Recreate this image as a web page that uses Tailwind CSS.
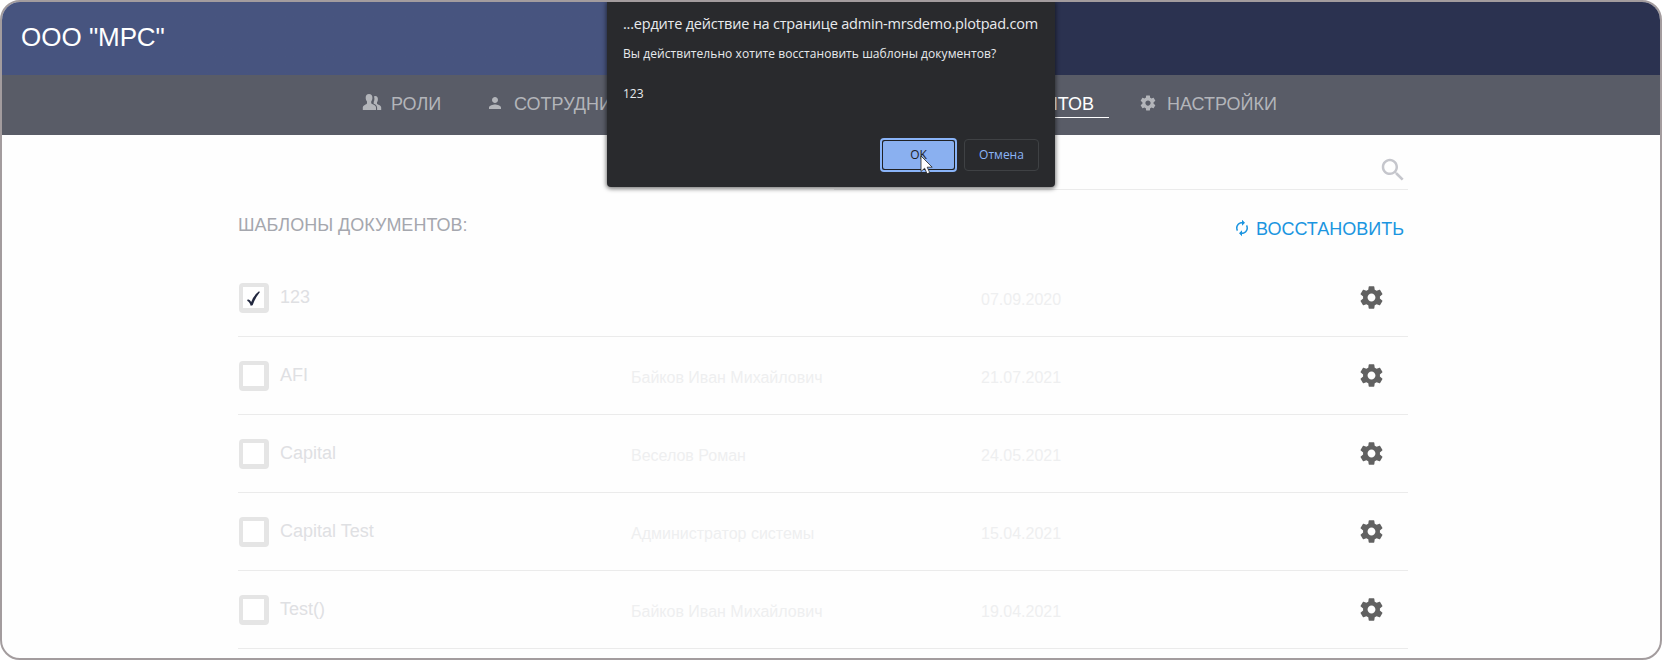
<!DOCTYPE html>
<html lang="ru"><head><meta charset="utf-8"><title>Шаблоны документов</title>
<script src="https://cdn.jsdelivr.net/npm/@tailwindcss/browser@4"></script></head>
<body class="bg-white">
<svg class="hidden"><symbol id="gear" viewBox="0 0 24 24"><path d="M19.43 12.98c.04-.32.07-.64.07-.98s-.03-.66-.07-.98l2.11-1.65c.19-.15.24-.42.12-.64l-2-3.46c-.12-.22-.39-.3-.61-.22l-2.49 1c-.52-.4-1.08-.73-1.69-.98l-.38-2.65C14.46 2.18 14.25 2 14 2h-4c-.25 0-.46.18-.49.42l-.38 2.65c-.61.25-1.17.59-1.69.98l-2.49-1c-.23-.09-.49 0-.61.22l-2 3.46c-.13.22-.07.49.12.64l2.11 1.65c-.04.32-.07.65-.07.98s.03.66.07.98l-2.11 1.65c-.19.15-.24.42-.12.64l2 3.46c.12.22.39.3.61.22l2.49-1c.52.4 1.08.73 1.69.98l.38 2.65c.03.24.24.42.49.42h4c.25 0 .46-.18.49-.42l.38-2.65c.61-.25 1.17-.59 1.69-.98l2.49 1c.23.09.49 0 .61-.22l2-3.46c.12-.22.07-.49-.12-.64l-2.11-1.65zM12 15.5c-1.93 0-3.5-1.57-3.5-3.5s1.57-3.5 3.5-3.5 3.5 1.57 3.5 3.5-1.57 3.5-3.5 3.5z"/></symbol></svg>
<div class="relative flex h-[660px] w-[1662px] flex-col overflow-hidden rounded-[20px] border-2 border-[#a39c9e] bg-[#fefefe] font-['Liberation_Sans',sans-serif]">
  <header class="h-[73px] shrink-0 bg-linear-to-r from-[#47547f] from-37% to-[#2b3250] to-63% pt-[19px] pl-[19px] text-[26px] leading-[32px] text-white">ООО "МРС"</header>
  <nav class="flex h-[60px] shrink-0 items-start bg-[#595c67] pt-[18px] pl-[360px] text-[18px] leading-[22px] whitespace-nowrap text-[#b3b5ba]">
    <a class="flex w-[124px]"><svg class="mt-px mr-[9px] h-[18px] w-5 fill-current" viewBox="0 0 20 18"><path d="M7 0c2.200 0 3.500 1.500 3.400 3.800 0 1.600-.5 2.800-1.200 3.700v1.800c.3.900 4.800 1.600 4.800 4.200V16H.8v-2.500c0-2.500 3.800-3 4.200-4V7.500C4.200 6.600 3.700 5.400 3.700 3.800 3.600 1.500 4.800 0 7 0z"/><path d="M13.200 2c2 0 2.800 1.500 2.700 3.200 0 1.400-.4 2.300-.9 3v1.600c.5 1 4.200 1.300 4.200 3.700V16h-4.100v-2.500c0-2.200-1.800-3-3.400-3.800V8c.5-1 .8-2.300.7-3.500 0-.8-.2-1.400-.5-2 .3-.3.800-.5 1.300-.5z"/></svg>РОЛИ</a>
    <a class="flex w-[160px]"><svg class="mt-px mr-[10px] h-[18px] w-[18px] fill-current" viewBox="0 0 24 24"><path d="M12 12c2.210 0 4-1.790 4-4s-1.790-4-4-4-4 1.790-4 4 1.790 4 4 4zm0 2c-2.670 0-8 1.340-8 4v2h16v-2c0-2.660-5.330-4-8-4z"/></svg>СОТРУДНИКИ</a>
    <a class="ml-[216px] h-[25px] w-[247px] border-b border-white pr-[15px] text-right text-white">ШАБЛОНЫ ДОКУМЕНТОВ</a>
    <a class="ml-[30px] flex"><svg class="mt-px mr-[10px] h-[18px] w-[18px] fill-current"><use href="#gear"/></svg>НАСТРОЙКИ</a>
  </nav>
  <main class="flex w-[1406px] flex-col pl-[236px]">
    <div class="flex h-[55px] w-[574px] justify-end self-end border-b border-[#ebebeb] pt-5"><svg class="h-[30px] w-[30px] fill-[#c5c6cc]" viewBox="0 0 24 24"><path d="M15.500 14h-.79l-.28-.27C15.410 12.590 16 11.110 16 9.500 16 5.910 13.090 3 9.500 3S3 5.910 3 9.500 5.910 16 9.500 16c1.610 0 3.090-.59 4.230-1.570l.27.28v.79l5 4.990L20.490 19l-4.990-5zm-6 0C7.010 14 5 11.990 5 9.500S7.010 5 9.500 5 14 7.010 14 9.500 11.990 14 9.500 14z"/></svg></div>
    <div class="flex h-[69px] items-start justify-between pr-[4px] text-[18px] leading-5 text-[#a5a7ae]">
      <h1 class="pt-[25px]">ШАБЛОНЫ ДОКУМЕНТОВ:</h1>
      <a class="flex pt-[29px] text-[#1b95e0]"><svg class="mr-[5px] h-[18px] w-[18px] fill-current" viewBox="0 0 24 24"><path d="M12 6v3l4-4-4-4v3c-4.420 0-8 3.580-8 8 0 1.570.46 3.030 1.240 4.260L6.700 14.800c-.45-.83-.7-1.790-.7-2.800 0-3.310 2.690-6 6-6zm6.760 1.740L17.300 9.200c.44.84.7 1.790.7 2.800 0 3.310-2.690 6-6 6v-3l-4 4 4 4v-3c4.420 0 8-3.580 8-8 0-1.570-.46-3.030-1.240-4.260z"/></svg>ВОССТАНОВИТЬ</a>
    </div>
    <div class="flex h-[78px] items-start border-b border-[#ebebeb]"><span class="mt-6 ml-px flex h-[30px] w-[30px] items-center justify-center rounded-[4px] border-4 border-r-5 border-b-5 border-[#e5e5e5] bg-white pt-px"><svg class="h-[15px] w-[13px] fill-[#22283f]" viewBox="0 0 13 15"><path d="M0.200 8.800Q2.600 7.400 4.200 11Q6.500 4.500 12 .3L12.900 1Q8.500 6.500 5.600 14.300L3.700 14.700Q2.300 10.600.4 10z"/></svg></span><span class="w-[362px] pt-[28px] pl-[11px] text-[18px] leading-5 text-[#dfe0e3]">123</span><span class="w-[350px] pt-[31px] text-[16px] leading-5 text-[#eeeff0]"></span><span class="w-[377px] pt-[31px] text-[16px] leading-5 text-[#eeeff0]">07.09.2020</span><svg class="mt-[25px] h-[27px] w-[27px] fill-[#616161]"><use href="#gear"/></svg></div>
    <div class="flex h-[78px] items-start border-b border-[#ebebeb]"><span class="mt-6 ml-px h-[30px] w-[30px] rounded-[4px] border-4 border-r-5 border-b-5 border-[#e5e5e5] bg-white"></span><span class="w-[362px] pt-[28px] pl-[11px] text-[18px] leading-5 text-[#dfe0e3]">AFI</span><span class="w-[350px] pt-[31px] text-[16px] leading-5 text-[#eeeff0]">Байков Иван Михайлович</span><span class="w-[377px] pt-[31px] text-[16px] leading-5 text-[#eeeff0]">21.07.2021</span><svg class="mt-[25px] h-[27px] w-[27px] fill-[#616161]"><use href="#gear"/></svg></div>
    <div class="flex h-[78px] items-start border-b border-[#ebebeb]"><span class="mt-6 ml-px h-[30px] w-[30px] rounded-[4px] border-4 border-r-5 border-b-5 border-[#e5e5e5] bg-white"></span><span class="w-[362px] pt-[28px] pl-[11px] text-[18px] leading-5 text-[#dfe0e3]">Capital</span><span class="w-[350px] pt-[31px] text-[16px] leading-5 text-[#eeeff0]">Веселов Роман</span><span class="w-[377px] pt-[31px] text-[16px] leading-5 text-[#eeeff0]">24.05.2021</span><svg class="mt-[25px] h-[27px] w-[27px] fill-[#616161]"><use href="#gear"/></svg></div>
    <div class="flex h-[78px] items-start border-b border-[#ebebeb]"><span class="mt-6 ml-px h-[30px] w-[30px] rounded-[4px] border-4 border-r-5 border-b-5 border-[#e5e5e5] bg-white"></span><span class="w-[362px] pt-[28px] pl-[11px] text-[18px] leading-5 text-[#dfe0e3]">Capital Test</span><span class="w-[350px] pt-[31px] text-[16px] leading-5 text-[#eeeff0]">Администратор системы</span><span class="w-[377px] pt-[31px] text-[16px] leading-5 text-[#eeeff0]">15.04.2021</span><svg class="mt-[25px] h-[27px] w-[27px] fill-[#616161]"><use href="#gear"/></svg></div>
    <div class="flex h-[78px] items-start border-b border-[#ebebeb]"><span class="mt-6 ml-px h-[30px] w-[30px] rounded-[4px] border-4 border-r-5 border-b-5 border-[#e5e5e5] bg-white"></span><span class="w-[362px] pt-[28px] pl-[11px] text-[18px] leading-5 text-[#dfe0e3]">Test()</span><span class="w-[350px] pt-[31px] text-[16px] leading-5 text-[#eeeff0]">Байков Иван Михайлович</span><span class="w-[377px] pt-[31px] text-[16px] leading-5 text-[#eeeff0]">19.04.2021</span><svg class="mt-[25px] h-[27px] w-[27px] fill-[#616161]"><use href="#gear"/></svg></div>
  </main>
  <!-- Browser confirmation dialog -->
  <div class="absolute top-0 left-[605px] flex h-[185px] w-[448px] flex-col rounded-b-[4px] bg-[#292a2d] pl-4 font-['Open_Sans','Noto_Sans',sans-serif] whitespace-nowrap text-[#e8eaed] shadow-[0_1px_4px_1px_rgba(0,0,0,0.5)]">
    <div class="h-[34px] pt-[11px] text-[14.5px] leading-[22px] tracking-[-0.21px]">...ердите действие на странице admin-mrsdemo.plotpad.com</div>
    <div class="pt-2 text-[12px] leading-5 tracking-[0.06px]">Вы действительно хотите восстановить шаблоны документов?</div>
    <div class="pt-5 text-[12px] leading-5">123</div>
    <div class="mt-[34px] flex items-center gap-[7px] pl-[257px] text-[12px]">
      <button class="relative h-[34px] w-[77px] rounded-[4px] border-2 border-[#8ab4f8] bg-[#202124] p-px text-[#202124]"><span class="flex h-full items-center justify-center rounded-[2px] bg-[#8ab0f0]">OK</span>
        <svg class="absolute top-[15px] left-[38px] h-[20px] w-[14px]" viewBox="0 0 14 20"><path d="M1 1v15.500l3.600-3.300 2.500 5.600 2.600-1.200-2.500-5.400h5z" fill="#fff" stroke="#222" stroke-width=".8"/></svg></button>
      <button class="h-8 w-[75px] rounded-[4px] border border-[#3f4144] text-[#8ab4f8]">Отмена</button>
    </div>
  </div>
</div>
</body></html>
